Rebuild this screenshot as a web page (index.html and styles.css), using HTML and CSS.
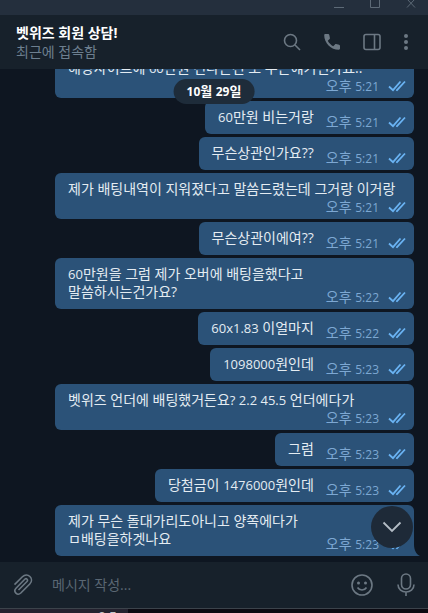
FILE: index.html
```html
<!DOCTYPE html>
<html lang="ko">
<head>
  <meta charset="UTF-8" />
  <meta name="viewport" content="width=device-width, initial-scale=1.0"/>
  <title>벳위즈 회원 상담!</title>
  <link rel="stylesheet" href="styles.css">
</head>
<body>

  <!-- Icons used more than once -->
  <svg class="defs" aria-hidden="true">
    <symbol id="ticks" viewBox="0 0 18 12">
      <path d="M1 6.5 L5 10.2 L12.5 1.5 M8.2 9.8 L9 10.2 L17 1.5" />
    </symbol>
  </svg>

  <!-- Window buttons -->
  <div class="titlebar">
    <button aria-label="최소화"><svg viewBox="0 0 12 12"><path d="M1 7.5h10"/></svg></button>
    <button aria-label="최대화"><svg viewBox="0 0 12 12"><path d="M1.5 -1.500h9v9h-9z"/></svg></button>
    <button aria-label="닫기"><svg viewBox="0 0 12 12"><path d="M2 -1l8 8.500M10 -1l-8 8.500"/></svg></button>
  </div>

  <!-- Header -->
  <header class="header">
    <div class="peer">
      <h1>벳위즈 회원 상담!</h1>
      <p>최근에 접속함</p>
    </div>
    <div class="tools">
      <button aria-label="검색"><svg width="18" height="18" viewBox="0 0 18 18"><circle cx="7.5" cy="7.5" r="6"/><path d="M12 12l5 5"/></svg></button>
      <button aria-label="통화"><svg class="solid" width="18" height="18" viewBox="0 0 18 18"><path d="M1.2 2.2C1.2 1.5 1.7 1 2.4 1h2.8c.6 0 1 .4 1.1.9l.6 3c.1.4 0 .8-.3 1.1L4.8 7.8c1.2 2.3 3.1 4.2 5.4 5.4l1.8-1.8c.3-.3.7-.4 1.1-.3l3 .6c.5.1.9.6.9 1.1v2.8c0 .7-.5 1.2-1.200 1.200C8 16.8 1.2 10 1.2 2.2z"/></svg></button>
      <button aria-label="정보 창"><svg width="18" height="18" viewBox="0 0 18 18"><rect x="1" y="1.5" width="16" height="15" rx="2"/><path d="M11.5 2v14"/></svg></button>
      <button aria-label="메뉴"><svg class="solid" width="6" height="18" viewBox="0 0 6 18"><circle cx="3" cy="3" r="2"/><circle cx="3" cy="9" r="2"/><circle cx="3" cy="15" r="2"/></svg></button>
    </div>
  </header>

  <!-- Messages -->
  <main class="chat">
    <div class="date"><span class="num">10</span>월 <span class="num">29</span>일</div>

    <div class="message wide stacked">
      <p>해당사이트에 <span class="num">60</span>만원 건다는건 또 무슨얘기인가요..</p>
      <div class="meta"><time>오후 <span class="num">5:21</span></time><svg class="ticks"><use href="#ticks"/></svg></div>
    </div>
    <div class="message">
      <p><span class="num">60</span>만원 비는거랑</p>
      <div class="meta"><time>오후 <span class="num">5:21</span></time><svg class="ticks"><use href="#ticks"/></svg></div>
    </div>
    <div class="message">
      <p>무슨상관인가요??</p>
      <div class="meta"><time>오후 <span class="num">5:21</span></time><svg class="ticks"><use href="#ticks"/></svg></div>
    </div>
    <div class="message wide stacked">
      <p>제가 배팅내역이 지워졌다고 말씀드렸는데 그거랑 이거랑</p>
      <div class="meta"><time>오후 <span class="num">5:21</span></time><svg class="ticks"><use href="#ticks"/></svg></div>
    </div>
    <div class="message">
      <p>무슨상관이에여??</p>
      <div class="meta"><time>오후 <span class="num">5:21</span></time><svg class="ticks"><use href="#ticks"/></svg></div>
    </div>
    <div class="message wide">
      <p><span class="num">60</span>만원을 그럼 제가 오버에 배팅을했다고<br>말씀하시는건가요?</p>
      <div class="meta"><time>오후 <span class="num">5:22</span></time><svg class="ticks"><use href="#ticks"/></svg></div>
    </div>
    <div class="message">
      <p><span class="num">60x1.83</span> 이얼마지</p>
      <div class="meta"><time>오후 <span class="num">5:22</span></time><svg class="ticks"><use href="#ticks"/></svg></div>
    </div>
    <div class="message">
      <p><span class="num">1098000</span>원인데</p>
      <div class="meta"><time>오후 <span class="num">5:23</span></time><svg class="ticks"><use href="#ticks"/></svg></div>
    </div>
    <div class="message wide stacked">
      <p>벳위즈 언더에 배팅했거든요<span class="num">? 2.2 45.5</span> 언더에다가</p>
      <div class="meta"><time>오후 <span class="num">5:23</span></time><svg class="ticks"><use href="#ticks"/></svg></div>
    </div>
    <div class="message">
      <p>그럼</p>
      <div class="meta"><time>오후 <span class="num">5:23</span></time><svg class="ticks"><use href="#ticks"/></svg></div>
    </div>
    <div class="message">
      <p>당첨금이 <span class="num">1476000</span>원인데</p>
      <div class="meta"><time>오후 <span class="num">5:23</span></time><svg class="ticks"><use href="#ticks"/></svg></div>
    </div>
    <div class="message wide last">
      <p>제가 무슨 돌대가리도아니고 양쪽에다가<br>ㅁ배팅을하겟나요</p>
      <div class="meta"><time>오후 <span class="num">5:23</span></time><svg class="ticks"><use href="#ticks"/></svg></div>
      <svg class="tail" viewBox="0 0 6 12"><path d="M0 0C0 6 2 10 6 12H0z"/></svg>
    </div>

    <button class="scroll-down" aria-label="맨 아래로"><svg width="20" height="12" viewBox="0 0 20 12"><path d="M1.5 1.5l8.5 8.5 8.5-8.5"/></svg></button>
  </main>

  <!-- Message input -->
  <form class="composer">
    <button type="button" aria-label="파일 첨부"><svg width="22" height="24" viewBox="0 0 22 24"><path d="M6.5 17l8.5-8.500c1.600-1.600-.6-3.800-2.200-2.200L4 15.200c-3.200 3.400 1.400 8 4.800 4.800l9-9c5-5.200-2.300-12.300-7.400-7.200L2.500 11.600"/></svg></button>
    <input type="text" placeholder="메시지 작성..." aria-label="메시지 작성" />
    <button type="button" aria-label="이모티콘"><svg width="24" height="24" viewBox="0 0 24 24"><circle cx="12" cy="12" r="10"/><path d="M7.5 14.5c2 3.300 7 3.300 9 0"/><circle class="dot" cx="8.5" cy="10" r="1.5"/><circle class="dot" cx="15.5" cy="10" r="1.5"/></svg></button>
    <button type="button" aria-label="음성 메시지"><svg width="20" height="24" viewBox="0 0 20 24"><rect x="5.5" y="1" width="9" height="15" rx="4.5"/><path d="M2 11.5c0 10 16 10 16 0M10 19v4"/></svg></button>
  </form>

  <!-- Window behind -->
  <div class="behind"><span>-0.5</span></div>

</body>
</html>
```
FILE: styles.css
```css
* { box-sizing: border-box; margin: 0; padding: 0; }
body { font-family: 'Open Sans', 'Noto Sans CJK KR', sans-serif; font-size: 14px; line-height: 18px; height: 100vh; display: flex; flex-direction: column; overflow: hidden; background: #0e1621; color: #e4ecf2; }
button { display: flex; background: none; border: none; color: inherit; cursor: pointer; }
svg { display: block; fill: none; stroke: currentColor; stroke-width: 2; }
.defs { position: absolute; width: 0; height: 0; }
.solid { fill: currentColor; stroke: none; }
.num { font-size: 13px; line-height: 1; }

.titlebar { flex: none; height: 15px; display: flex; justify-content: flex-end; gap: 24px; padding-right: 11px; background: #242f3d; color: #5d6a77; }
.titlebar svg { width: 12px; height: 12px; stroke-width: 1; }

.header { flex: none; height: 54px; display: flex; align-items: center; justify-content: space-between; padding: 0 19px 0 16px; background: #17212b; }
.peer h1 { font-size: 14px; line-height: 19px; color: #fff; }
.peer p { line-height: 19px; color: #6d7f8f; }
.tools { display: flex; align-items: center; gap: 22px; color: #6c7883; }
.tools svg { stroke-width: 1.6; }

.chat { flex: 1; min-height: 0; position: relative; display: flex; flex-direction: column; justify-content: flex-end; align-items: flex-end; gap: 3px; padding: 0 14px 6px 55px; overflow: hidden; }
.date { position: absolute; z-index: 1; top: 10px; left: 50%; transform: translateX(-50%); padding: 3px 13px 4px; border-radius: 13px; background: #1e2c3a; color: #fff; font-size: 13px; font-weight: bold; white-space: nowrap; }
.date .num, .meta .num { font-size: 12px; }
.message { flex: none; display: flex; align-items: flex-end; justify-content: space-between; gap: 12px; padding: 7px 8px 0 13px; border-radius: 6px; background: #2b5278; }
.message p { padding-bottom: 8px; }
.wide { align-self: stretch; }
.stacked { flex-direction: column; align-items: stretch; gap: 0; }
.stacked p { padding-bottom: 0; }
.meta { display: flex; align-items: center; justify-content: flex-end; gap: 9px; padding-bottom: 3px; color: #7da8d3; white-space: nowrap; }
.ticks { width: 18px; height: 12px; color: #6ab3f3; stroke-width: 1.8; }
.last { position: relative; border-bottom-right-radius: 0; }
.tail { position: absolute; right: -6px; bottom: 0; width: 6px; height: 12px; fill: #2b5278; stroke: none; }
.scroll-down { position: absolute; right: 15px; bottom: 14px; width: 42px; height: 42px; align-items: center; justify-content: center; border-radius: 50%; background: #1e2a38; color: #b4bdc6; }
.scroll-down svg { stroke-width: 1.8; }

.composer { flex: none; height: 46px; display: flex; align-items: center; gap: 22px; padding: 0 12px; background: #17212b; color: #6c7883; }
.composer svg { stroke-width: 1.6; }
.composer input { flex: 1; min-width: 0; margin-left: -4px; background: none; border: none; outline: none; color: #e4ecf2; font: inherit; }
.composer input::placeholder { color: #5a6773; }
.composer .dot { fill: currentColor; stroke: none; }

.behind { flex: none; height: 5px; overflow: hidden; border-top: 1px solid #3c434b; background: linear-gradient(90deg, #24222f 128px, #0c0a12 128px); padding-left: 94px; font-size: 13px; font-weight: bold; line-height: 14px; color: #c0c4c8; }
```
